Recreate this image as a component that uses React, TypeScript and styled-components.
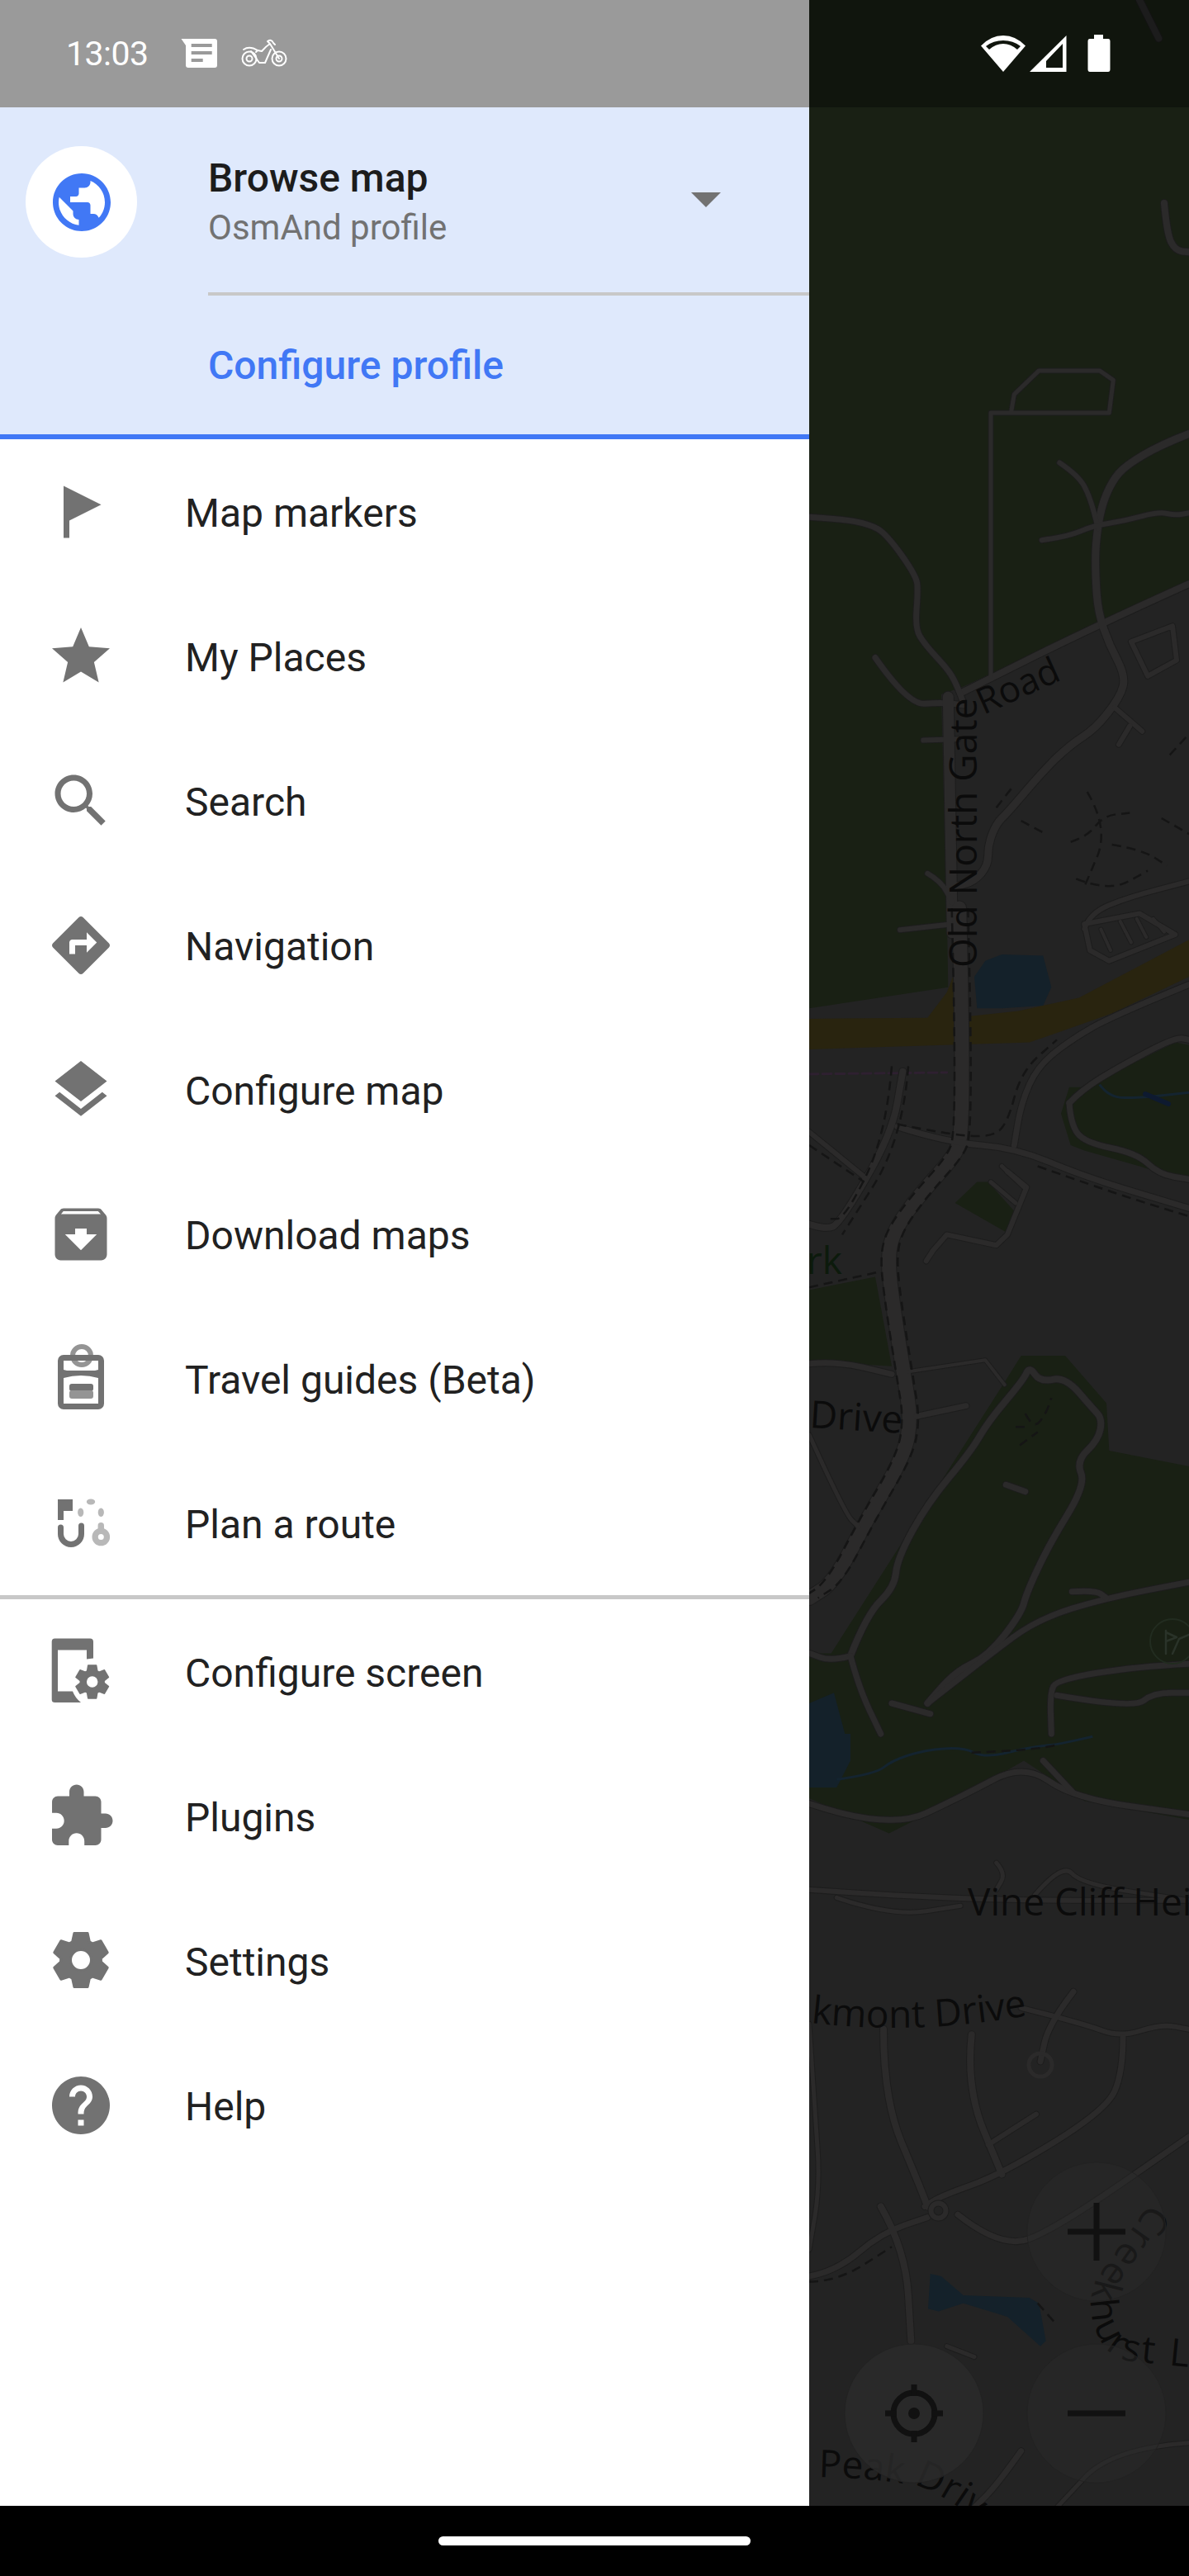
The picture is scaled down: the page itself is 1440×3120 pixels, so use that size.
import React from "react";
import styled, { createGlobalStyle } from "styled-components";

const GlobalStyle = createGlobalStyle`
  html, body {
    margin: 0;
    padding: 0;
    background: #000;
  }
  body {
    font-family: Roboto, "Liberation Sans", sans-serif;
  }
`;

const Page = styled.div`
  width: 1440px;
  height: 3120px;
  display: flex;
  flex-direction: column;
  overflow: hidden;
`;

const Screen = styled.div`
  display: flex;
  height: 3035px;
`;

const Drawer = styled.aside`
  width: 980px;
  flex: none;
  display: flex;
  flex-direction: column;
  background: #fff;
`;

const StatusLeft = styled.div`
  height: 130px;
  flex: none;
  display: flex;
  align-items: center;
  padding-left: 80px;
  background: #9a9a9a;
  color: #fff;
`;

const Clock = styled.span`
  font-size: 41px;
  line-height: 130px;
  letter-spacing: -0.5px;
  width: 139px;
`;

const NoteIcon = styled.svg`
  width: 48px;
  height: 40px;
  margin-right: 25px;
`;

const BikeIcon = styled.svg`
  width: 60px;
  height: 40px;
`;

const Header = styled.header`
  flex: none;
  display: flex;
  align-items: flex-start;
  padding-top: 47px;
  box-sizing: border-box;
  background: #dfe9fc;
  border-bottom: 6px solid #4178f5;
  height: 402px;
`;

const Avatar = styled.div`
  width: 135px;
  height: 135px;
  flex: none;
  margin-left: 31px;
  margin-right: 86px;
  border-radius: 50%;
  background: #fff;
  display: flex;
  align-items: center;
  justify-content: center;
  svg {
    width: 84px;
    height: 84px;
    fill: #4178f5;
  }
`;

const Profile = styled.div`
  flex: 1;
  display: flex;
  flex-direction: column;
`;

const ProfileTop = styled.div`
  height: 130px;
  display: flex;
  justify-content: space-between;
  align-items: center;
  padding-right: 107px;
`;

const ProfileText = styled.div`
  padding-top: 8px;
`;

const ProfileTitle = styled.div`
  font-size: 48px;
  line-height: 60px;
  font-weight: 500;
  color: #1c1c1c;
`;

const ProfileSub = styled.div`
  font-size: 42px;
  line-height: 60px;
  color: #727272;
`;

const Caret = styled.div`
  width: 0;
  height: 0;
  border-left: 18px solid transparent;
  border-right: 18px solid transparent;
  border-top: 18px solid #727272;
`;

const ProfileRule = styled.div`
  height: 4px;
  margin-top: 47px;
  background: #c8c8c8;
`;

const ConfigureLink = styled.a`
  font-size: 48px;
  line-height: 60px;
  font-weight: 500;
  color: #4178f5;
  margin-top: 55px;
`;

const Menu = styled.nav`
  display: flex;
  flex-direction: column;
`;

const MenuRow = styled.div`
  height: 175px;
  display: flex;
  align-items: center;
  padding-left: 56px;
  font-size: 48px;
  color: #212121;
`;

const MenuLabel = styled.span`
  padding-top: 3px;
`;

const MenuIcon = styled.svg`
  width: 84px;
  height: 84px;
  flex: none;
  margin-right: 84px;
  fill: #727272;
`;

const MenuRule = styled.div`
  height: 5px;
  background: #c8c8c8;
`;

const MapPane = styled.main`
  flex: 1;
  position: relative;
  overflow: hidden;
`;

const MapCanvas = styled.svg`
  position: absolute;
  inset: 0;
  width: 460px;
  height: 3035px;
`;

const StatusRight = styled.div`
  position: absolute;
  top: 42px;
  left: 208px;
  display: flex;
  align-items: flex-start;
`;

const WifiIcon = styled.svg`
  width: 54px;
  height: 46px;
  margin-right: 5px;
`;

const SignalIcon = styled.svg`
  width: 45px;
  height: 46px;
  margin-right: 25px;
`;

const BatteryIcon = styled.svg`
  width: 28px;
  height: 46px;
`;

const NavBar = styled.footer`
  flex: 1;
  background: #000;
  display: flex;
  align-items: center;
  justify-content: center;
`;

const HomePill = styled.div`
  width: 378px;
  height: 11px;
  border-radius: 6px;
  background: #fff;
`;

// builds a six tooth cog with a round hole, used with fillRule evenodd
const gearPath = (cx: number, cy: number, R: number, r: number, hole: number) => {
  const at = (deg: number, rad: number) => {
    const a = (deg * Math.PI) / 180;
    return `${(cx + rad * Math.cos(a)).toFixed(2)} ${(cy + rad * Math.sin(a)).toFixed(2)}`;
  };
  const pts: string[] = [];
  for (let i = 0; i < 6; i++) {
    const c = -90 + 60 * i;
    pts.push(at(c - 25, r), at(c - 14, R), at(c + 14, R), at(c + 25, r));
  }
  return (
    `M${pts.join("L")}Z` +
    `M${cx - hole} ${cy}a${hole} ${hole} 0 1 0 ${hole * 2} 0a${hole} ${hole} 0 1 0 ${-hole * 2} 0Z`
  );
};

const ICONS: Record<string, React.ReactNode> = {
  flag: <path d="M6 3L19 9.5 8 15v6H6z" />,
  star: (
    <path d="M12 17.27L18.18 21l-1.64-7.03L22 9.24l-7.19-.61L12 2 9.19 8.63 2 9.24l5.46 4.73L5.82 21z" />
  ),
  search: (
    <path d="M15.5 14h-.79l-.28-.27C15.41 12.59 16 11.11 16 9.5 16 5.91 13.09 3 9.5 3S3 5.91 3 9.5 5.91 16 9.5 16c1.61 0 3.09-.59 4.23-1.57l.27.28v.79l5 4.99L20.49 19l-4.99-5zm-6 0C7.01 14 5 11.99 5 9.5S7.01 5 9.5 5 14 7.01 14 9.5 11.99 14 9.5 14z" />
  ),
  nav: (
    <path d="M21.71 11.29l-9-9c-.39-.39-1.02-.39-1.41 0l-9 9c-.39.39-.39 1.02 0 1.41l9 9c.39.39 1.02.39 1.41 0l9-9c.39-.38.39-1.01 0-1.41zM14 14.5V12h-4v3H8v-4c0-.55.45-1 1-1h5V7.5l3.5 3.5-3.5 3.5z" />
  ),
  layers: (
    <path d="M11.99 18.54l-7.37-5.73L3 14.07l9 7 9-7-1.63-1.27-7.38 5.74zM12 16l7.36-5.73L21 9l-9-7-9 7 1.63 1.27L12 16z" />
  ),
  archive: (
    <path d="M20.54 5.23l-1.39-1.68C18.88 3.21 18.47 3 18 3H6c-.47 0-.88.21-1.16.55L3.46 5.23C3.17 5.57 3 6.02 3 6.5V19c0 1.1.9 2 2 2h14c1.1 0 2-.9 2-2V6.5c0-.48-.17-.93-.46-1.27zM12 17.5L6.5 12H10v-2h4v2h3.5L12 17.5zM5.12 5l.81-1h12l.94 1H5.12z" />
  ),
  puzzle: (
    <path d="M20.5 11H19V7c0-1.1-.9-2-2-2h-4V3.5C13 2.12 11.88 1 10.5 1S8 2.12 8 3.5V5H4c-1.1 0-1.99.9-1.99 2v3.8H3.5c1.49 0 2.7 1.21 2.7 2.7s-1.21 2.7-2.7 2.7H2V20c0 1.1.9 2 2 2h3.8v-1.5c0-1.49 1.21-2.7 2.7-2.7 1.49 0 2.7 1.21 2.7 2.7V22H17c1.1 0 2-.9 2-2v-4h1.5c1.38 0 2.5-1.12 2.5-2.5S21.88 11 20.5 11z" />
  ),
  help: (
    <path d="M12 2C6.48 2 2 6.48 2 12s4.48 10 10 10 10-4.48 10-10S17.52 2 12 2zm1 17h-2v-2h2v2zm2.07-7.75l-.9.92C13.45 12.9 13 13.5 13 15h-2v-.5c0-1.1.45-2.1 1.17-2.83l1.24-1.26c.37-.36.59-.86.59-1.41 0-1.1-.9-2-2-2s-2 .9-2 2H8c0-2.21 1.79-4 4-4s4 1.79 4 4c0 .88-.36 1.68-.93 2.25z" />
  ),
};

const Icon = ({ name }: { name: string }) => {
  if (name === "guide") {
    return (
      <MenuIcon viewBox="6 9 84 84">
        <circle cx="49" cy="23" r="11" fill="none" stroke="#949494" strokeWidth="6" />
        <path
          fillRule="evenodd"
          d="M27 22H69a7 7 0 0 1 7 7V81a7 7 0 0 1-7 7H27a7 7 0 0 1-7-7V29a7 7 0 0 1 7-7ZM27 29V41H69V29ZM27 49V81H69V49Q48 43 27 49Z"
        />
        <path d="M27 40Q48 47 69 40V50Q48 44 27 50Z" />
        <rect x="34" y="57" width="29" height="9" rx="3" />
        <rect x="34" y="65" width="29" height="10" rx="3" fill="#949494" />
      </MenuIcon>
    );
  }
  if (name === "route") {
    return (
      <MenuIcon viewBox="6 4 84 84">
        <path d="M20 17H38V31H27V42H20Z" />
        <path
          d="M23.5 51V59A12.5 12.5 0 0 0 48.5 59V49"
          fill="none"
          stroke="#727272"
          strokeWidth="7"
          strokeLinecap="round"
        />
        <g fill="#b8b8b8">
          <ellipse cx="47.7" cy="32.7" rx="3.6" ry="5.2" />
          <ellipse cx="60" cy="20" rx="5.2" ry="3.4" />
          <ellipse cx="72.3" cy="32.7" rx="3.6" ry="5.2" />
          <rect x="68.6" y="45" width="7.4" height="12" rx="3.7" />
          <path
            fillRule="evenodd"
            d="M61.5 62.5a10.8 10.8 0 1 0 21.6 0a10.8 10.8 0 1 0-21.6 0ZM68.8 62.5a3.5 3.5 0 1 1 7 0a3.5 3.5 0 1 1-7 0Z"
          />
        </g>
      </MenuIcon>
    );
  }
  if (name === "screen") {
    return (
      <MenuIcon viewBox="6 8.5 84 84">
        <path d="M16.5 10H59Q63 10 63 14V34L55 35V24H20V74H38Q41 82 48 87.5H16.5Q12.7 87.5 12.7 84V14Q12.7 10 16.5 10Z" />
        <path
          fillRule="evenodd"
          stroke="#727272"
          strokeWidth="1.5"
          strokeLinejoin="round"
          d={gearPath(61.7, 62.5, 20.5, 14.5, 7.5)}
        />
      </MenuIcon>
    );
  }
  if (name === "gear") {
    return (
      <MenuIcon viewBox="0 0 84 84">
        <path
          fillRule="evenodd"
          stroke="#727272"
          strokeWidth="3"
          strokeLinejoin="round"
          d={gearPath(42, 41, 33.5, 24.5, 12.5)}
        />
      </MenuIcon>
    );
  }
  return <MenuIcon viewBox="0 0 24 24">{ICONS[name]}</MenuIcon>;
};

const MENU_TOP = [
  { icon: "flag", label: "Map markers" },
  { icon: "star", label: "My Places" },
  { icon: "search", label: "Search" },
  { icon: "nav", label: "Navigation" },
  { icon: "layers", label: "Configure map" },
  { icon: "archive", label: "Download maps" },
  { icon: "guide", label: "Travel guides (Beta)" },
  { icon: "route", label: "Plan a route" },
];

const MENU_BOTTOM = [
  { icon: "screen", label: "Configure screen" },
  { icon: "puzzle", label: "Plugins" },
  { icon: "gear", label: "Settings" },
  { icon: "help", label: "Help" },
];

// map traces were read off three strips of the reference, each with its own scale
type Strip = 6 | 7 | 8;
const STRIPS: Record<Strip, [number, number]> = {
  6: [130, 1.568],
  7: [1100, 1.568],
  8: [2100, 1.537],
};

const toPoints = (strip: Strip, pts: string, dx = 0) => {
  const [top, sy] = STRIPS[strip];
  return pts
    .replace("!", "")
    .split(" ")
    .map((p) => {
      const [x, y] = p.split(",").map(Number);
      return [980 + (x + dx) / 3, top + y / sy];
    });
};

const polyPath = (strip: Strip, pts: string) =>
  "M" + toPoints(strip, pts).map((p) => `${p[0].toFixed(1)} ${p[1].toFixed(1)}`).join("L") + "Z";

// a leading ! keeps the corners of a trace sharp
const curvePath = (strip: Strip, pts: string, dx = 0) => {
  const p = toPoints(strip, pts, dx);
  if (pts.startsWith("!")) {
    return "M" + p.map((q) => `${q[0].toFixed(1)} ${q[1].toFixed(1)}`).join("L");
  }
  let d = `M${p[0][0].toFixed(1)} ${p[0][1].toFixed(1)}`;
  for (let i = 1; i < p.length - 1; i++) {
    const mx = (p[i][0] + p[i + 1][0]) / 2;
    const my = (p[i][1] + p[i + 1][1]) / 2;
    d += `Q${p[i][0].toFixed(1)} ${p[i][1].toFixed(1)} ${mx.toFixed(1)} ${my.toFixed(1)}`;
  }
  const last = p[p.length - 1];
  return d + `L${last[0].toFixed(1)} ${last[1].toFixed(1)}`;
};

const GREENS: [Strip, string][] = [
  [6, "0,-210 1380,-210 1380,900 560,1100 480,1115 500,1568 0,1568"],
  [7, "0,0 500,0 505,150 0,190"],
  [7, "915,390 945,340 1000,340 1330,255 1380,260 1380,520 1200,490 1000,460 950,450"],
  [7, "530,560 610,520 650,520 745,575 715,615"],
  [7, "0,725 240,700 300,870 0,860"],
  [7, "80,1415 710,900 770,850 930,850 1080,940 1090,1030 1380,1060 1380,1568 0,1568 0,1415"],
  [8, "0,0 1380,0 1380,160 1000,125 780,50 560,115 290,185 0,120"],
];

const WATERS: [Strip, string][] = [
  [7, "600,130 640,100 700,88 850,90 880,150 850,185 700,190 610,190"],
  [7, "0,1510 90,1490 130,1568 0,1568"],
  [8, "0,0 150,0 150,50 100,100 0,100"],
  [8, "432,1070 440,1005 480,1010 560,1045 800,1050 835,1060 860,1130 840,1140 720,1085 560,1060 470,1075"],
];

const ROADS: [Strip, number, string][] = [
  [6, 7, "1200,-204 1270,-131"],
  [6, 7, "1380,905 1040,985 560,1110"],
  [6, 8, "1380,620 1280,640 1150,680 1100,710 1060,760 1040,830 1040,890 1050,960 1090,1020 1150,1080 1130,1120 1040,1180 950,1210 850,1260 720,1340 680,1360 650,1400 650,1440 600,1470 530,1480"],
  [6, 6, "0,778 120,782 220,792 280,810 390,890 395,920 385,990 420,1020 500,1065 530,1090 560,1130"],
  [6, 6, "240,1045 360,1135 480,1130 560,1135"],
  [6, 4, "!660,1080 660,580 1090,580 1105,518 1055,500 835,500 745,545 735,575"],
  [6, 5, "910,675 980,700 1020,740 1050,800"],
  [6, 5, "845,822 940,815 1030,795 1150,785 1270,768 1330,775 1380,770"],
  [6, 7, "1290,182 1300,240 1330,272 1380,275"],
  [6, 5, "415,1202 540,1200"],
  [6, 5, "330,1562 540,1550"],
  [6, 5, "!1170,1015 1320,985 1335,1050 1230,1080 1170,1015"],
  [6, 5, "1110,1140 1210,1185"],
  [6, 5, "1165,1175 1125,1210"],
  [6, 12, "505,1120 520,1568"],
  [6, 5, "430,1455 480,1470 520,1510"],
  [6, 5, "1000,1560 1020,1530 1160,1500 1380,1470"],
  [7, 16, "545,0 555,200 555,430 530,470 400,545 310,610 285,660 300,740 345,890 370,970 345,1040 210,1160 90,1280 0,1310"],
  [7, 5, "!1000,30 1200,10 1330,50 1090,100 1020,80 1000,30"],
  [7, 3, "!1060,40 1095,80"],
  [7, 3, "!1130,25 1170,65"],
  [7, 3, "!1190,20 1225,55"],
  [7, 3, "!1250,20 1290,45"],
  [7, 6, "1380,145 1100,205 950,250 830,300 770,370 745,450"],
  [7, 6, "320,415 500,445 750,455 1000,510 1380,570"],
  [7, 5, "0,425 200,510"],
  [7, 7, "0,600 60,610 110,600 300,430 340,310"],
  [7, 5, "!720,500 790,530 720,620 680,640 500,620 450,650 425,670"],
  [7, 4, "!660,520 750,560"],
  [7, 4, "!700,490 780,530"],
  [7, 6, "945,370 990,345 1130,300 1330,245 1380,250"],
  [7, 6, "945,370 950,410 1000,445 1190,465 1270,505 1380,515"],
  [7, 6, "0,865 100,860 300,885"],
  [7, 3, "!360,880 640,858 710,905"],
  [7, 6, "390,965 570,945"],
  [7, 4, "0,1000 130,1150 180,1175"],
  [7, 7, "150,1420 210,1340 310,1290 320,1235 430,1130 590,1030 650,975 780,895 800,870 840,900 930,890 1030,950 1065,970 1050,1010 970,1050 1005,1095 870,1210 790,1300 770,1340 650,1420 530,1450 430,1510"],
  [7, 6, "150,1420 80,1430 0,1415"],
  [7, 6, "150,1420 180,1480 260,1568"],
  [7, 6, "430,1510 650,1420 830,1350 1080,1310 1380,1280"],
  [7, 6, "955,1298 1040,1295 1080,1310"],
  [7, 6, "1380,1435 1190,1440 900,1465 875,1490 880,1568"],
  [7, 6, "900,1495 1180,1520 1250,1490 1380,1490"],
  [7, 6, "300,1510 370,1520 440,1530"],
  [7, 6, "715,1095 785,1108"],
  [8, 6, "0,130 290,180 560,115 780,55 960,120 1380,150"],
  [8, 6, "850,50 960,110"],
  [8, 5, "0,290 530,310 1380,310"],
  [8, 4, "820,300 920,240 990,280 1380,310"],
  [8, 4, "100,305 300,340 550,320"],
  [8, 4, "680,240 715,260 680,290"],
  [8, 5, "770,510 1000,540 1130,565 1280,540 1380,550"],
  [8, 6, "1140,565 1140,630 1080,700 700,820 480,860 420,880"],
  [8, 7, "270,550 270,680 400,840 430,880"],
  [8, 7, "590,560 570,660 700,820"],
  [8, 5, "650,765 825,708"],
  [8, 6, "960,480 870,540 840,610"],
  [8, 6, "540,895 700,960 900,920 1380,750"],
  [8, 6, "0,1010 100,1000 260,930 430,900"],
  [8, 7, "260,880 350,960 370,1130"],
  [8, 4, "0,540 20,700 40,840 0,960"],
  [8, 4, "500,1140 600,1160"],
  [8, 6, "770,1335 680,1400 600,1440"],
  [8, 4, "1380,1320 1100,1330 900,1440"],
];

const TRAILS: [Strip, string, number?][] = [
  [7, "545,0 555,200 555,430 530,470 400,545 310,610 285,660 300,740 345,890 370,970 345,1040 210,1160 90,1280 0,1310", -27],
  [7, "545,0 555,200 555,430 530,470 400,545 310,610 285,660 300,740 345,890 370,970 345,1040 210,1160 90,1280 0,1310", 32],
  [7, "320,410 510,430 660,435 720,410 770,310 900,250"],
  [7, "830,490 1100,540 1380,585"],
  [7, "0,720 260,690"],
  [7, "300,300 280,430 130,590 70,590"],
  [7, "360,300 340,440 120,620"],
  [7, "0,450 200,520"],
  [7, "750,985 790,985"],
  [7, "785,960 815,990 860,960 880,930"],
  [7, "765,1020 830,995"],
  [6, "680,1330 740,1290"],
  [6, "770,1355 860,1380"],
  [6, "950,1395 1010,1385 1070,1345 1165,1340"],
  [6, "1010,1300 1090,1370 1000,1480"],
  [6, "1100,1400 1210,1410 1300,1440"],
  [6, "970,1465 1090,1490 1230,1450"],
  [6, "1310,1230 1380,1190"],
  [6, "1280,1350 1380,1380"],
  [8, "0,1020 100,1020 300,955"],
  [8, "830,1060 900,1100"],
  [8, "590,35 800,30 910,20"],
];

const RIVERS: [Strip, string][] = [
  [7, "1055,335 1090,360 1200,360 1380,350"],
  [8, "100,85 240,75 300,50 420,30 560,25 640,45 800,25 900,20 1030,5"],
];

const TEXT_PATHS = {
  oldNorth: "M1183 1172L1183 850",
  road: "M1191 866L1300 817",
  kmont: "M982 2450Q1110 2465 1240 2442",
  creek: "M1393 2668L1328 2760Q1312 2800 1335 2838Q1350 2862 1390 2862L1470 2870",
  peak: "M991 3000Q1060 3001 1115 3012Q1160 3030 1190 3062",
};

const MapTexture = () => (
  <MapCanvas viewBox="980 0 460 3035">
    <defs>
      {Object.entries(TEXT_PATHS).map(([id, d]) => (
        <path key={id} id={id} d={d} />
      ))}
    </defs>
    <rect x="980" y="0" width="460" height="3035" fill="#232323" />
    {GREENS.map(([s, pts], i) => (
      <path key={i} d={polyPath(s, pts)} fill="#192014" />
    ))}
    {WATERS.map(([s, pts], i) => (
      <path key={i} d={polyPath(s, pts)} fill="#14212a" />
    ))}
    {RIVERS.map(([s, pts], i) => (
      <path key={i} d={curvePath(s, pts)} fill="none" stroke="#142430" strokeWidth="3" />
    ))}
    <g fill="none" strokeLinecap="round" strokeLinejoin="round">
      <path d={polyPath(7, "0,210 430,208 500,160 530,120 530,208 760,195 980,170 1380,60 1380,130 1100,200 800,255 0,268")} fill="#29240f" stroke="none" />
      <path d={curvePath(7, "0,315 500,312")} stroke="#2e2030" strokeWidth="3" strokeDasharray="11 5" />
      {ROADS.map(([s, w, pts], i) => (
        <path key={i} d={curvePath(s, pts)} stroke="#1d1d1d" strokeWidth={w + 3} />
      ))}
      {ROADS.map(([s, w, pts], i) => (
        <path key={i} d={curvePath(s, pts)} stroke="#2b2a2a" strokeWidth={w + 1} />
      ))}
      {TRAILS.map(([s, pts, dx], i) => (
        <path
          key={i}
          d={curvePath(s, pts, dx)}
          stroke="#151515"
          strokeWidth="2.5"
          strokeDasharray="11 7"
          strokeLinecap="butt"
        />
      ))}
      <circle cx="1136.5" cy="2677.5" r="9" stroke="#1d1d1d" strokeWidth="8" />
      <circle cx="1136.5" cy="2677.5" r="9" stroke="#2b2a2a" strokeWidth="6" />
      <circle cx="1260" cy="2501" r="14" stroke="#2b2a2a" strokeWidth="5" />
      <circle cx="1420" cy="1988" r="27" stroke="#222c20" strokeWidth="2" />
      <path d="M1412 1975V2003M1412 1977L1425 1983L1412 1988M1428 1985L1440 1980M1428 1985L1420 2003" stroke="#2a3329" strokeWidth="2.5" />
      <path d="M1387 1325L1415 1337" stroke="#0e1a30" strokeWidth="6" />
    </g>
    <g fontFamily="'Open Sans', sans-serif" fontSize="46" fill="#0b0b0b">
      <text>
        <textPath href="#oldNorth">Old North Gate</textPath>
      </text>
      <text fontSize="44">
        <textPath href="#road">Road</textPath>
      </text>
      <text x="977" y="1543" fill="#0c1a0c">rk</text>
      <text transform="translate(980 1729) rotate(3.5)">Drive</text>
      <text x="1172" y="2320">Vine Cliff Hei</text>
      <text>
        <textPath href="#kmont">kmont Drive</textPath>
      </text>
      <text letterSpacing="3">
        <textPath href="#creek">Creekhurst L</textPath>
      </text>
      <text>
        <textPath href="#peak">Peak Drive</textPath>
      </text>
    </g>
    <g fill="#2a2a2a" fillOpacity="0.85" stroke="#222" strokeWidth="1">
      <circle cx="1328" cy="2703" r="84" fillOpacity="0.45" />
      <circle cx="1328" cy="2923" r="84" fillOpacity="0.45" />
      <circle cx="1107" cy="2923" r="84" />
    </g>
    <g stroke="#111" strokeWidth="7" fill="none">
      <path d="M1293 2703H1363M1328 2668V2738" />
      <path d="M1293 2923H1363" />
      <circle cx="1107" cy="2923" r="25" />
      <path d="M1072 2923H1086M1128 2923H1142M1107 2888V2902M1107 2944V2958" />
    </g>
    <circle cx="1107" cy="2923" r="7" fill="#111" />
    <rect x="980" y="0" width="460" height="130" fill="#000" fillOpacity="0.33" />
  </MapCanvas>
);

const App: React.FC = () => {
  return (
    <Page>
      <GlobalStyle />
      <Screen>
        <Drawer>
          <StatusLeft>
            <Clock>13:03</Clock>
            <NoteIcon viewBox="9 7 48 40">
              <path
                fill="#fff"
                fillRule="evenodd"
                d="M9.5 9H50Q53 9 53 12V41Q53 44 50 44H18Q15 44 15 41V17ZM21.7 15V19H46.7V15ZM21.7 24V28H46.7V24ZM21.7 33V37H35.7V33Z"
              />
            </NoteIcon>
            <BikeIcon viewBox="80 7 60 40" fill="none" stroke="#fff" strokeWidth="2" strokeLinecap="round" strokeLinejoin="round">
              <circle cx="90" cy="33" r="8.5" />
              <circle cx="90" cy="33" r="3.5" />
              <circle cx="126" cy="33" r="8.5" />
              <circle cx="126" cy="33" r="3.5" />
              <path d="M83 22Q90 17 100 23L105 24Q110 18 115 15L112 12Q117 9 119 14L121 16M115 15L126 33" />
              <path d="M92 24L102 38H109L116 22M100 23L98 25" />
            </BikeIcon>
          </StatusLeft>
          <Header>
            <Avatar>
              <svg viewBox="0 0 24 24">
                <path d="M12 2C6.48 2 2 6.48 2 12s4.48 10 10 10 10-4.48 10-10S17.52 2 12 2zm-1 17.93c-3.95-.49-7-3.85-7-7.93 0-.62.08-1.21.21-1.79L9 15v1c0 1.1.9 2 2 2v1.93zm6.9-2.54c-.26-.81-1-1.39-1.9-1.39h-1v-3c0-.55-.45-1-1-1H8v-2h2c.55 0 1-.45 1-1V7h2c1.1 0 2-.9 2-2v-.41c2.93 1.19 5 4.06 5 7.41 0 2.08-.8 3.97-2.1 5.39z" />
              </svg>
            </Avatar>
            <Profile>
              <ProfileTop>
                <ProfileText>
                  <ProfileTitle>Browse map</ProfileTitle>
                  <ProfileSub>OsmAnd profile</ProfileSub>
                </ProfileText>
                <Caret />
              </ProfileTop>
              <ProfileRule />
              <ConfigureLink>Configure profile</ConfigureLink>
            </Profile>
          </Header>
          <Menu>
            {MENU_TOP.map((item) => (
              <MenuRow key={item.label}>
                <Icon name={item.icon} />
                <MenuLabel>{item.label}</MenuLabel>
              </MenuRow>
            ))}
            <MenuRule />
            {MENU_BOTTOM.map((item) => (
              <MenuRow key={item.label}>
                <Icon name={item.icon} />
                <MenuLabel>{item.label}</MenuLabel>
              </MenuRow>
            ))}
          </Menu>
        </Drawer>
        <MapPane>
          <MapTexture />
          <StatusRight>
            <WifiIcon viewBox="0 0 54 46">
              <path
                fill="#fff"
                fillRule="evenodd"
                d="M27 45L0 13.5Q12 1 27 1T54 13.5ZM6 14Q15 7 27 7T48 14L44 18Q36 11 27 11T10 18Z"
              />
            </WifiIcon>
            <SignalIcon viewBox="0 0 45 46">
              <path
                fill="#fff"
                fillRule="evenodd"
                d="M44.5 1V45H0ZM40 11L20 32V40H40Z"
              />
            </SignalIcon>
            <BatteryIcon viewBox="0 0 28 46">
              <path
                fill="#fff"
                d="M8 0H19V5H25Q27.500 5 27.500 8V42Q27.500 45 25 45H3Q0.500 45 0.500 42V8Q0.500 5 3 5H8Z"
              />
            </BatteryIcon>
          </StatusRight>
        </MapPane>
      </Screen>
      <NavBar>
        <HomePill />
      </NavBar>
    </Page>
  );
};

export default App;
